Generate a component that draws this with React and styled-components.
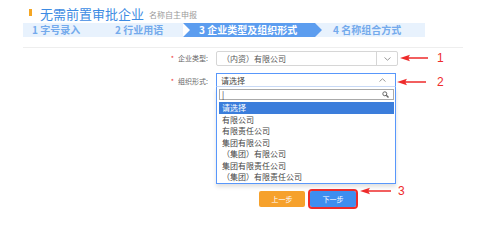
import React from 'react'
import styled, { createGlobalStyle } from 'styled-components'

const GlobalStyle = createGlobalStyle`
  body {
    margin: 0;
    background: #fff;
    font-family: "Noto Sans CJK SC", "Noto Sans", sans-serif;
  }
`

const Page = styled.div`
  position: relative;
  width: 500px;
  height: 250px;
  overflow: hidden;
  background: #fff;
`

const Header = styled.div`
  display: flex;
  align-items: center;
  padding: 5px 0 0 29px;
  height: 17px;
`

const Mark = styled.span`
  width: 3px;
  height: 7px;
  background: #f5a623;
  margin: -3px 8px 0 0;
`

const Title = styled.h1`
  margin: 0;
  font-size: 13px;
  font-weight: 400;
  color: #3d8be3;
  line-height: 17px;
`

const Subtitle = styled.span`
  margin-left: 5px;
  font-size: 8px;
  color: #9a9a9a;
  line-height: 17px;
  padding-top: 2px;
`

const Steps = styled.div`
  display: flex;
  margin: 1px 0 0 23px;
  width: 402px;
  height: 14px;
`

const Step = styled.div`
  width: ${p => p.$w}px;
  margin-left: ${p => p.$ml || 0}px;
  padding-left: ${p => p.$pl}px;
  box-sizing: border-box;
  font-size: 10px;
  font-weight: 700;
  line-height: 14px;
  white-space: nowrap;
  color: ${p => (p.$active ? '#fff' : '#74aaec')};
  background: ${p => (p.$active ? '#5c9def' : '#e8f2fd')};
  position: relative;
  z-index: ${p => (p.$active ? 1 : 0)};
  clip-path: ${p =>
    p.$active
      ? 'polygon(0 0, calc(100% - 7px) 0, 100% 50%, calc(100% - 7px) 100%, 0 100%, 7px 50%)'
      : 'none'};
`

const Divider = styled.div`
  margin: 10px 0 0 23px;
  width: 440px;
  height: 1px;
  background: #eeeeee;
`

const Form = styled.div`
  display: flex;
  flex-direction: column;
  gap: 7px;
  padding-top: 3px;
`

const Row = styled.div`
  display: flex;
  align-items: flex-start;
`

const Label = styled.div`
  width: 208px;
  margin-right: 8px;
  text-align: right;
  font-size: 7px;
  color: #666;
  line-height: ${p => p.$lh}px;
  padding-top: ${p => p.$pt || 0}px;

  &::before {
    content: '*';
    color: #e33;
    margin-right: 4px;
  }
`

const SelectBox = styled.div`
  display: flex;
  align-items: center;
  width: 182px;
  height: 15px;
  box-sizing: border-box;
  border: 1px solid #d6d6d6;
  border-radius: 2px;
  font-size: 8px;
  color: #555;
`

const SelectText = styled.span`
  flex: 1;
  padding-left: 5px;
`

const SelectButton = styled.span`
  width: 20px;
  height: 100%;
  display: flex;
  align-items: center;
  justify-content: center;
  border-left: 1px solid #d6d6d6;
`

const ChosenWrap = styled.div`
  width: 180px;
  display: flex;
  flex-direction: column;
`

const ChosenBox = styled.div`
  display: flex;
  align-items: center;
  height: 14px;
  box-sizing: border-box;
  border: 1px solid #5897fb;
  border-bottom-color: #c9daf7;
  font-size: 8px;
  color: #444;
  padding: 0 9px 0 4px;
  background: #fff;
`

const Drop = styled.div`
  border: 1px solid #5897fb;
  border-top: 0;
  box-shadow: 0 3px 4px rgba(0, 0, 0, 0.12);
  padding: 2px 1px 0 2px;
  background: #fff;
`

const Search = styled.div`
  display: flex;
  align-items: center;
  justify-content: space-between;
  height: 11px;
  box-sizing: border-box;
  border: 1px solid #aaa;
  padding: 0 4px 0 2px;
  font-size: 8px;
  color: #333;
  line-height: 9px;
`

const Options = styled.ul`
  list-style: none;
  margin: 2px 0 0;
  padding: 0;
`

const Option = styled.li`
  height: 11.5px;
  line-height: 11.5px;
  font-size: 8px;
  padding-left: 3px;
  color: ${p => (p.$on ? '#fff' : '#444')};
  background: ${p => (p.$on ? '#3b7ddb' : 'transparent')};
`

const Actions = styled.div`
  display: flex;
  gap: 5px;
  margin: 0 0 0 259px;
`

const Button = styled.button`
  width: 46px;
  height: 16px;
  border: 0;
  border-radius: 2px;
  padding: 0;
  font-family: inherit;
  font-size: 7px;
  color: #fff;
  background: ${p => (p.$primary ? '#3e8ef0' : '#f6a12c')};
  outline: ${p => (p.$marked ? '2px solid #ee2b2b' : 'none')};
`

const Note = styled.div`
  position: absolute;
  left: ${p => p.$x}px;
  top: ${p => p.$y}px;
  display: flex;
  align-items: center;
  gap: ${p => p.$gap}px;
  font-family: "Liberation Sans", sans-serif;
  font-size: 12px;
  color: #ee2b2b;
  line-height: 12px;
`

function Arrow({ len }) {
  return (
    <svg width={len} height="8" viewBox={`0 0 ${len} 8`}>
      <path d={`M0 4 L10 0.8 L8.5 3.2 L${len} 3.2 L${len} 4.8 L8.5 4.8 L10 7.2 Z`} fill="#ee2b2b" />
    </svg>
  )
}

function Chevron({ up }) {
  return (
    <svg width="7" height="4" viewBox="0 0 7 4">
      <path d={up ? 'M0.5 3.5 L3.5 0.8 L6.5 3.5' : 'M0.5 0.5 L3.5 3.2 L6.5 0.5'} stroke="#999" strokeWidth="1" fill="none" />
    </svg>
  )
}

const options = [
  '请选择',
  '有限公司',
  '有限责任公司',
  '集团有限公司',
  '（集团）有限公司',
  '集团有限责任公司',
  '（集团）有限责任公司',
]

export default function App() {
  return (
    <Page>
      <GlobalStyle />
      <Header>
        <Mark />
        <Title>无需前置审批企业</Title>
        <Subtitle>名称自主申报</Subtitle>
      </Header>
      <Steps>
        <Step $w={83} $pl={9}>1 字号录入</Step>
        <Step $w={77} $pl={9}>2 行业用语</Step>
        <Step $w={139} $pl={16} $active>3 企业类型及组织形式</Step>
        <Step $w={110} $ml={-7} $pl={18}>4 名称组合方式</Step>
      </Steps>
      <Divider />
      <Form>
        <Row>
          <Label $lh={15}>企业类型:</Label>
          <SelectBox>
            <SelectText>（内资）有限公司</SelectText>
            <SelectButton><Chevron /></SelectButton>
          </SelectBox>
        </Row>
        <Row>
          <Label $lh={14} $pt={1}>组织形式:</Label>
          <ChosenWrap>
            <ChosenBox>
              <SelectText style={{ paddingLeft: 0 }}>请选择</SelectText>
              <Chevron up />
            </ChosenBox>
            <Drop>
              <Search>
                <span>|</span>
                <svg width="7" height="7" viewBox="0 0 7 7">
                  <circle cx="2.8" cy="2.8" r="2" stroke="#666" strokeWidth="1" fill="none" />
                  <path d="M4.3 4.3 L6.5 6.5" stroke="#666" strokeWidth="1.4" />
                </svg>
              </Search>
              <Options>
                {options.map((o, i) => (
                  <Option key={o} $on={i === 0}>{o}</Option>
                ))}
              </Options>
            </Drop>
          </ChosenWrap>
        </Row>
        <Actions>
          <Button>上一步</Button>
          <Button $primary $marked>下一步</Button>
        </Actions>
      </Form>
      <Note $x={400} $y={52} $gap={9}>
        <Arrow len={28} />
        <span>1</span>
      </Note>
      <Note $x={397} $y={76} $gap={11}>
        <Arrow len={29} />
        <span>2</span>
      </Note>
      <Note $x={360} $y={185} $gap={7}>
        <Arrow len={31} />
        <span>3</span>
      </Note>
    </Page>
  )
}
